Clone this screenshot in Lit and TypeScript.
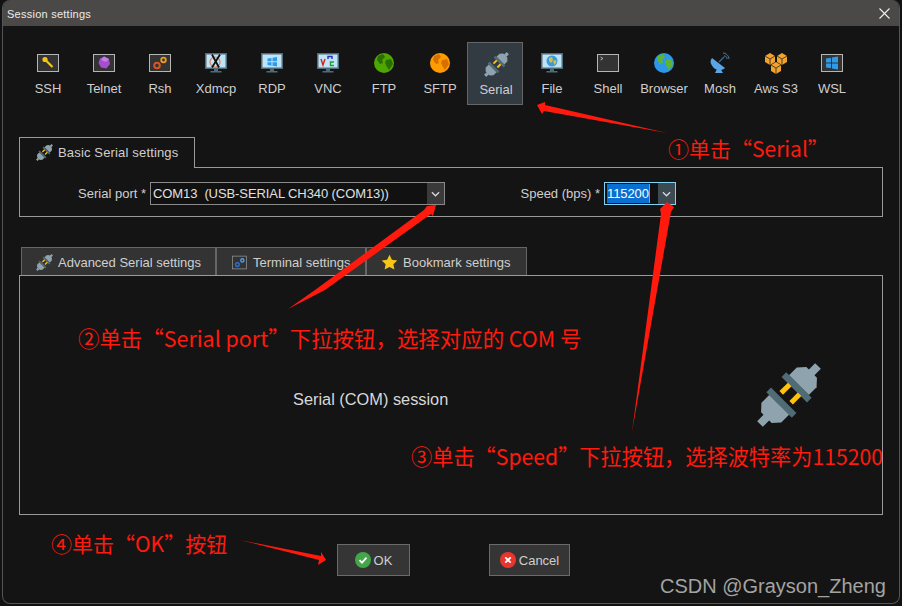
import { LitElement, html, css, svg } from "lit";
import { customElement } from "lit/decorators.js";

const box = (inner: unknown) => html`<svg class="ic" viewBox="0 0 24 24">
  <rect x="1.500" y="3.500" width="21" height="17" fill="#333" stroke="#b5b5b5" stroke-width="1"/>${inner}</svg>`;
const monitor = (inner: unknown) => html`<svg class="ic" viewBox="0 0 24 24">
  <rect x="1" y="2" width="22" height="16" fill="#4f6b7a"/><rect x="2.500" y="3.500" width="19" height="13" fill="#bfe3f7"/>
  ${inner}
  <rect x="10" y="18" width="4" height="2" fill="#4f6b7a"/><rect x="6.500" y="20" width="11" height="1.500" fill="#4f6b7a"/></svg>`;
const globe = (a: string, b: string) => html`<svg class="ic" viewBox="0 0 24 24">
  <circle cx="12" cy="12" r="10" fill="${a}"/>
  <path d="M6 5l5-2 2 3-3 3 1 3-3 1-3-4zM14 9l5-1 2 5-4 6-2-3-2-4z" fill="${b}"/></svg>`;
const plugParts = svg`
  <g transform="rotate(45 41 41)">
    <rect x="37" y="0" width="8" height="10" fill="#8fa3af"/>
    <path d="M27 27 L27 16 L33.500 9 L48.500 9 L55 16 L55 27Z" fill="#8fa3af"/>
    <rect x="23" y="27" width="36" height="6.500" fill="#4f6b76"/>
    <rect x="31.500" y="33" width="5" height="12" fill="#ffc20e"/><rect x="45.500" y="33" width="5" height="12" fill="#ffc20e"/>
    <rect x="23" y="48.500" width="36" height="6.500" fill="#4f6b76"/>
    <path d="M27 55 L27 66 L33.500 73 L48.500 73 L55 66 L55 55Z" fill="#8fa3af"/>
    <rect x="37" y="72" width="8" height="10" fill="#8fa3af"/>
  </g>`;
const plug = (cls: string) => html`<svg class="${cls}" viewBox="9 9 64 64">${plugParts}</svg>`;
const winTiles = (c: string) => svg`<path d="M6 7.500l5-.8v4.800h-5zM12 6.500l6-1v6h-6zM6 12.500h5v4.800l-5-.8zM12 12.500h6v6l-6-1z" fill="${c}"/>`;

const tools: { label: string; icon: unknown; active?: boolean }[] = [
  { label: "SSH", icon: box(svg`<circle cx="9" cy="8.500" r="2.600" fill="#f5c518"/><path d="M10.500 10l6 6" stroke="#f5c518" stroke-width="2.200"/>`) },
  { label: "Telnet", icon: box(svg`<path d="M12 5.500l5 2.500 1 5-3.500 4.500-5.500-1-2.500-4.500 1.500-4.500z" fill="#a54fd0"/><path d="M12 5.500l5 2.500-3 3-5-2z" fill="#c27ee6"/>`) },
  { label: "Rsh", icon: box(svg`<circle cx="9" cy="14.500" r="2.800" fill="none" stroke="#d9541e" stroke-width="2"/><circle cx="15.500" cy="9" r="2.300" fill="none" stroke="#f29c1f" stroke-width="1.800"/>`) },
  { label: "Xdmcp", icon: monitor(svg`<circle cx="11" cy="11" r="5" fill="none" stroke="#d98560" stroke-width="1.200"/><path d="M8 3.500l7 13M16 3.500l-8 13" stroke="#111" stroke-width="1.800"/>`) },
  { label: "RDP", icon: monitor(svg`<path d="M7.500 7.500l4-.6v3.400h-4zM12.500 6.800l4.500-.7v4.200h-4.500zM7.500 11.300h4v3.400l-4-.6zM12.500 11.300h4.500v4.200l-4.500-.7z" fill="#2f9be8"/>`) },
  { label: "VNC", icon: monitor(svg`<path d="M5 8l2 6 2-6" stroke="#d42020" stroke-width="1.400" fill="none"/><path d="M12 8V5.500h4V8" stroke="#2030c0" stroke-width="1.400" fill="none"/><path d="M18 11h-3.500v3.500H18" stroke="#20a030" stroke-width="1.400" fill="none"/>`) },
  { label: "FTP", icon: globe("#4fa600", "#2a6e00") },
  { label: "SFTP", icon: globe("#ff9d00", "#d96f00") },
  { label: "Serial", icon: plug("ic-serial"), active: true },
  { label: "File", icon: monitor(svg`<circle cx="12" cy="10" r="5.500" fill="#3a9ae0"/><path d="M9 7l3-1 1 3-2 3-2-2zM13 10l3-1 .5 2-2 3z" fill="#d8c23a"/>`) },
  { label: "Shell", icon: box(svg`<path d="M4.500 6l2.500 1.500L4.500 9" stroke="#ccc" stroke-width=".8" fill="none"/>`) },
  { label: "Browser", icon: globe("#2f97e8", "#5cb531") },
  { label: "Mosh", icon: html`<svg class="ic" viewBox="0 0 24 24">
      <path d="M4 7l13 10c-3 3-9 3-12-1s-3-6-1-9z" fill="#5aa5e6"/><path d="M10 16l-3 6h8l-3-5z" fill="#5aa5e6"/>
      <path d="M11 11l5-5" stroke="#2d6ea8" stroke-width="1.200"/>
      <path d="M15 2c3 0 6 3 6 6M16 5c2 0 3 1 3 3" stroke="#5b7f99" stroke-width="1" fill="none"/></svg>` },
  { label: "Aws S3", icon: html`<svg class="ic" viewBox="0 0 24 24"><g fill="#f2a32f">
      <path d="M1 5l5-3 5 3v6l-5 3-5-3z"/><path d="M13 5l5-3 5 3v6l-5 3-5-3z"/><path d="M7 14l5-3 5 3v6l-5 3-5-3z"/></g>
      <path d="M1 5l5 3 5-3M6 8v6M13 5l5 3 5-3M18 8v6M7 14l5 3 5-3M12 17v6" fill="none" stroke="#141414" stroke-width=".7"/></svg>` },
  { label: "WSL", icon: box(winTiles("#2f9be8")) },
];

const smallStar = html`<svg class="tab-ic" viewBox="0 0 24 24"><path d="M12 1l3.400 7 7.600 1-5.500 5.300 1.400 7.700-6.900-3.700-6.900 3.700 1.400-7.700L1 9l7.600-1z" fill="#f5c518"/></svg>`;
const termIcon = html`<svg class="tab-ic" viewBox="0 0 24 24"><rect x="2" y="3" width="20" height="18" fill="#333" stroke="#999"/><circle cx="9" cy="15" r="2.600" fill="none" stroke="#2f6fd0" stroke-width="2"/><circle cx="16" cy="9" r="2.200" fill="none" stroke="#4f9be8" stroke-width="2"/></svg>`;
const chevron = html`<svg class="chev" viewBox="0 0 10 6"><path d="M1 1l4 4 4-4" fill="none" stroke="#d8d8d8" stroke-width="1.400"/></svg>`;

@customElement("app-root")
export class AppRoot extends LitElement {
  static styles = css`
    :host { display: block; width: 902px; height: 606px; position: relative; overflow: hidden; background: #121212;
      font-family: "Liberation Sans", Arial, sans-serif; font-size: 13px; color: #cfcfcf; }
    .win { box-sizing: border-box; margin-left: 2px; width: 898px; height: 604px; background: #141414;
      border: 1px solid #555; border-top: none; border-radius: 8px; display: flex; flex-direction: column; overflow: hidden; }
    .title { box-sizing: border-box; flex: none; height: 26px; background: #4a4947; display: flex; align-items: center; justify-content: space-between;
      padding: 1px 9px 0 4px; color: #ececec; font-size: 11px; letter-spacing: 0.25px; }
    .close { width: 11px; height: 11px; display: block; }
    .tools { display: flex; padding: 16px 0 0 17px; height: 63px; flex: none; }
    .tool { box-sizing: border-box; width: 56px; height: 63px; display: flex; flex-direction: column; align-items: center; padding-top: 8px; border: 1px solid transparent; }
    .tool.on { background: #323a42; border-color: #666; padding: 9px 0 0 2px; margin: 0 1px 0 -1px; }
    .ic { width: 24px; height: 24px; display: block; flex: none; }
    .ic-serial { width: 25px; height: 25px; display: block; flex: none; }
    .tool span { margin-top: 6px; line-height: 15px; white-space: nowrap; }
    .tool.on span { margin-top: 5px; }
    .section { padding: 0 16px 0 16px; flex: none; }
    .s1 { margin-top: 32px; }
    .tab { box-sizing: border-box; display: flex; align-items: center; gap: 5px; white-space: nowrap; }
    .tab-ic { width: 17px; height: 17px; display: block; flex: none; }
    .tab.main { width: 176px; height: 31px; border: 1px solid #9a9a9a; border-bottom: none; background: #141414; padding: 0 0 2px 16px;
      position: relative; margin-bottom: -1px; z-index: 1; letter-spacing: 0.16px; }
    .panel { box-sizing: border-box; border: 1px solid #9a9a9a; }
    .p1 { height: 50px; display: flex; align-items: center; padding-top: 3px; }
    .lab1 { width: 126px; text-align: right; margin-right: 4px; flex: none; }
    .combo { box-sizing: border-box; height: 23px; border: 1px solid #8a8a8a; display: flex; align-items: center; color: #e0e0e0; background: #111; flex: none; letter-spacing: -0.09px; }
    .c1 { width: 295px; }
    .c1 .val { flex: 1; padding-left: 2px; white-space: pre; }
    .lab2 { width: 155px; text-align: right; margin-right: 4px; flex: none; }
    .c2 { width: 72px; border-color: #7fd4f5; padding: 0; }
    .c2 .val { margin: 1px 0 1px 2px; width: 42px; height: 19px; line-height: 19px; background: #0a6fd0; color: #fff; border-right: 1px solid #f08020; flex: none; text-align: left; }
    .c2 .btn { margin-left: auto; background: #3c4a52; }
    .btn { box-sizing: border-box; width: 17px; height: 21px; background: #3a3a3a; display: flex; align-items: center; justify-content: center; flex: none; }
    .chev { width: 9px; height: 6px; display: block; }
    .tabs { display: flex; margin-left: 2px; height: 28px; position: relative; }
    .s2 { margin-top: 30px; }
    .t { box-sizing: border-box; height: 28px; background: #333; border: 1px solid #666; border-bottom: none; padding: 1px 0 0 14px; }
    .t1 { width: 195px; }
    .t2 { width: 150px; }
    .t3 { width: 161px; letter-spacing: 0.03px; }
    .p2 { height: 240px; display: flex; align-items: center; padding-left: 273px; font-size: 16.35px; color: #d8d8d8; }
    .p2 span { margin-top: 8px; }
    .p2 .big { width: 64px; height: 64px; margin-left: 309px; display: block; flex: none; }
    .actions { display: flex; padding-left: 334px; margin-top: 29px; flex: none; }
    .b { box-sizing: border-box; height: 32px; background: #353535; border: 1px solid #6a6a6a; display: flex; align-items: center; justify-content: center; gap: 3px; }
    .b svg { width: 16px; height: 16px; display: block; }
    .ok { width: 73px; }
    .cancel { width: 81px; margin-left: 79px; }
    .overlay { position: absolute; left: 0; top: 0; width: 902px; height: 606px; pointer-events: none; }
    .note { position: absolute; color: #ff1a0d; font-family: "Noto Sans CJK SC", "Liberation Sans", sans-serif; font-size: 21px; line-height: 28px; white-space: nowrap; }
    .n1 { left: 668px; top: 134px; }
    .n2 { left: 78px; top: 324px; font-size: 21.45px; }
    .n3 { left: 411px; top: 442px; font-size: 21.2px; }
    .n4 { left: 51px; top: 529px; }
    .mark { position: absolute; left: 660px; top: 575px; color: #a3a3a3; font-family: "Liberation Sans", sans-serif; font-size: 20px; line-height: 22px; white-space: nowrap; }
  `;

  render() {
    return html`
      <div class="win">
        <div class="title"><span>Session settings</span>
          <svg class="close" viewBox="0 0 11 11"><path d="M.5.5l10 10M10.500.5l-10 10" stroke="#eee" stroke-width="1.100"/></svg>
        </div>
        <div class="tools">
          ${tools.map((t) => html`<div class="tool ${t.active ? "on" : ""}">${t.icon}<span>${t.label}</span></div>`)}
        </div>
        <div class="section s1">
          <div class="tab main">${plug("tab-ic")}<span>Basic Serial settings</span></div>
          <div class="panel p1">
            <div class="lab1">Serial port *</div>
            <div class="combo c1"><div class="val">COM13  (USB-SERIAL CH340 (COM13))</div><div class="btn">${chevron}</div></div>
            <div class="lab2">Speed (bps) *</div>
            <div class="combo c2"><div class="val">115200</div><div class="btn">${chevron}</div></div>
          </div>
        </div>
        <div class="section s2">
          <div class="tabs">
            <div class="tab t t1">${plug("tab-ic")}<span>Advanced Serial settings</span></div>
            <div class="tab t t2">${termIcon}<span>Terminal settings</span></div>
            <div class="tab t t3">${smallStar}<span>Bookmark settings</span></div>
          </div>
          <div class="panel p2"><span>Serial (COM) session</span>${plug("big")}</div>
        </div>
        <div class="actions">
          <div class="b ok"><svg viewBox="0 0 16 16"><circle cx="8" cy="8" r="8" fill="#43a648"/><path d="M4.500 8.200l2.500 2.500 4.500-5" fill="none" stroke="#fff" stroke-width="1.800"/></svg><span>OK</span></div>
          <div class="b cancel"><svg viewBox="0 0 16 16"><circle cx="8" cy="8" r="8" fill="#e8352e"/><path d="M5.300 5.300l5.400 5.400M10.700 5.300l-5.400 5.400" fill="none" stroke="#fff" stroke-width="1.900"/></svg><span>Cancel</span></div>
        </div>
      </div>
      <svg class="overlay" viewBox="0 0 902 606">
        <g fill="#ff1a0d">
          <polygon points="537,105 545,102 545,105 667,133 544,111 542,114"/>
          <polygon points="436,205 433,216 431,214 325,290 288,309 315,290 424,210 427,206"/>
          <polygon points="667,202 674,207 671,212 632,432 661,214 660,209"/>
          <polygon points="326,560 318,565 319,560 240,540 321,556 321,552"/>
        </g>
      </svg>
      <div class="note n1">①单击“Serial”</div>
      <div class="note n2">②单击“Serial port”下拉按钮，选择对应的 COM 号</div>
      <div class="note n3">③单击“Speed”下拉按钮，选择波特率为115200</div>
      <div class="note n4">④单击“OK”按钮</div>
      <div class="mark">CSDN @Grayson_Zheng</div>
    `;
  }
}
